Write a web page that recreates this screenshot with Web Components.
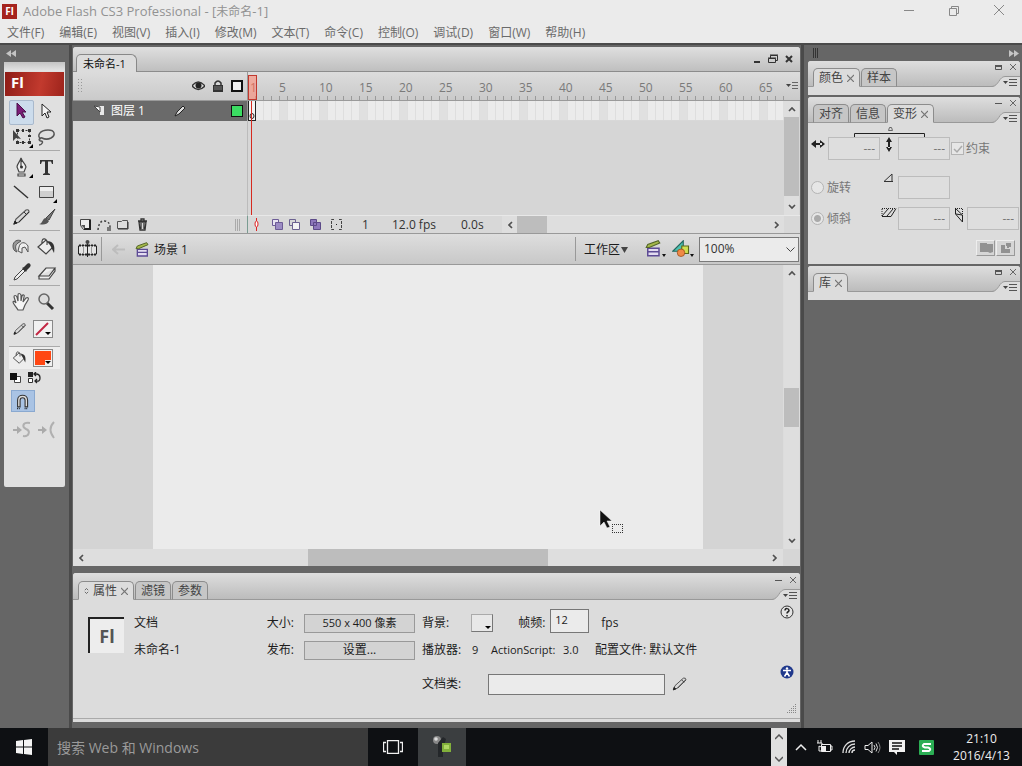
<!DOCTYPE html>
<html lang="zh-CN">
<head>
<meta charset="utf-8">
<title>Adobe Flash CS3 Professional</title>
<style>
html,body{margin:0;height:100%}
body{font:12px/16px "Open Sans","Noto Sans CJK SC",sans-serif;color:#1c1c1c;background:#666;overflow:hidden}
</style>
</head>
<body>
<flash-app></flash-app>
<script>
const RESET = `<style>
*{box-sizing:border-box}
button,input,select{font:inherit;color:inherit;margin:0;padding:0;border:0;background:none;border-radius:0;min-width:0}
button{display:inline-flex;align-items:center;justify-content:center}
svg{display:block;flex:none}
</style>`;
function define(name, html, ready) {
  const template = document.createElement('template');
  template.innerHTML = RESET + html;
  customElements.define(name, class extends HTMLElement {
    constructor() {
      super();
      this.attachShadow({ mode: 'open' }).append(template.content.cloneNode(true));
    }
    connectedCallback() { if (ready) ready(this, this.shadowRoot); }
  });
}

/* ---------- shared pieces ---------- */

const ICONS = {
  arrow: '<path d="M7 3v13l3-3 3 5 2-1-3-5h4z" fill="#7b1d78" stroke="#4b124a"/>',
  subarrow: '<path d="M7 4v12l3-3 2 5 2-1-2-5h4z" fill="#f4f4f4" stroke="#222"/>',
  transform: '<path d="M7.500 5.500h12v12h-12z" fill="none" stroke="#333" stroke-dasharray="2 2"/><path d="M6 4h3v3H6zM12 4h2v3h-2zM18 4h3v3h-3zM18 10h3v2h-3zM12 16h2v3h-2zM18 16h3v3h-3zM6 16h3v3H6z" fill="#333"/><path d="M3 5v11l3-3 5 1z" fill="#444"/><path d="M23 23h-4l4-4z" fill="#000"/>',
  lasso: '<path d="M6 14c-5-3-1-9 7-9 7 0 8 5 3 8-4 2-7 1-9 0-3-1-4 3-1 3 3 0 1 4-2 4" fill="none" stroke="#555" stroke-width="1.500"/>',
  pen: '<path d="M11 3c-1 4-4 6-4 9l2 5h5l2-5c0-3-4-5-5-9zM11 5v7M8 19h7v2H8z" fill="#eee" stroke="#444" stroke-width="1.200"/><circle cx="11.500" cy="12" r="1.500" fill="#333"/><path d="M23 23h-4l4-4z" fill="#000"/>',
  text: '<path d="M5 5h13v4h-1l-1-2.500h-3V18l2 1v1H8v-1l2-1V6.500H7L6 9H5z" fill="#333"/>',
  line: '<path d="M4 6l14 12" stroke="#333" stroke-width="1.500"/>',
  rect: '<path d="M4.500 6.500h14v11h-14z" fill="#cfcfcf" stroke="#444"/><path d="M5 7h13v4H5z" fill="#eee"/><path d="M22 23h-4l4-4z" fill="#000"/>',
  pencil: '<path d="M4 19l2-5L16 5q3-1 3 2L9 17z" fill="#d8d8d8" stroke="#555" stroke-width="1.200"/><path d="M4 19l1-3 2 2z" fill="#222" stroke="#222"/><path d="M14 7l3 3M9 17l10-10" stroke="#333"/>',
  brush: '<path d="M20 4L11 13l3 2z" fill="#777" stroke="#444"/><path d="M4 19c4 0 3-6 7-6l3 3c-2 4-6 4-10 3z" fill="#555"/>',
  ink: '<path d="M3 11c0-5 5-7 8-5l-3 2c-3 2-3 5-1 9-3-1-4-3-4-6z" fill="#999" stroke="#555"/><path d="M9 12c1-5 6-6 9-1v6l-3-5-3 1v5l-4-2z" fill="#eee" stroke="#555"/>',
  bucket: '<path d="M3 12l8-7 7 7-7 7zM7 9c-1-8 6-6 5 1" fill="#eee" stroke="#444" stroke-width="1.200"/><path d="M13 6c6 1 7 5 6 12l-3-6z" fill="#333"/>',
  dropper: '<path d="M4 20l1-3 8-8 2 2-8 8z" fill="#eee" stroke="#444"/><path d="M12 8l2-1 3-3c2-2 5 1 3 3l-3 3-1 2z" fill="#333"/>',
  eraser: '<path d="M4 16l7-8h9l-6 8zM4 16v3h10l6-8V8" fill="#eee" stroke="#444" stroke-width="1.200"/>',
  hand: '<path d="M8 20c-2-4-5-6-5-8 0-1 2-1 3 1L4 7c0-2 2-2 3 0l1 4V5c0-2 2-2 3 0v6l1-5c1-2 3-1 2 1l-1 5 3-4c2-1 3 0 2 2l-3 5-2 5z" fill="#f4f4f4" stroke="#555" stroke-width="1.200"/>',
  zoom: '<path d="M12 13l6 6" stroke="#333" stroke-width="3"/><circle cx="9" cy="9" r="5" fill="#ddd" stroke="#666" stroke-width="1.500"/>',
  magnet: '<path d="M5.500 19V11c0-8 12-8 12 0v8h-3v-8c0-4-6-4-6 0v8z" fill="#ddd" stroke="#333" stroke-width="1.300"/><path d="M5 21h4M14 21h4" stroke="#111" stroke-width="1.500" stroke-dasharray="1 1"/>',
  smooth: '<path d="M3 12h5" stroke="#aaa" stroke-width="2"/><path d="M7 8l5 4-5 4z" fill="#aaa"/><path d="M20 5c-8-1-8 4-4 6 5 2 3 8-3 7" fill="none" stroke="#b0b0b0" stroke-width="2"/>',
  straighten: '<path d="M3 12h5" stroke="#aaa" stroke-width="2"/><path d="M7 8l5 4-5 4z" fill="#aaa"/><path d="M19 4q-7 7 0 16" fill="none" stroke="#b0b0b0" stroke-width="2"/>',
  scene: '<path d="M5 11h15v10H5z" fill="#e3dcf0" stroke="#5d4b95" stroke-width="2"/><path d="M5 15.500h15" stroke="#5d4b95" stroke-width="2"/><path d="M3 10l2-4L19 1l2 3L7 10z" fill="#a4b84a" stroke="#55662a" stroke-width="1.500"/>',
  symbols: '<path d="M1 15L15 1v14z" fill="#4dc0b0" stroke="#24675e" stroke-width="1.500"/><path d="M13 8h9v10h-9z" fill="#d0e050" stroke="#5b681b" stroke-width="1.500"/><circle cx="12" cy="17" r="5" fill="#f08a45" stroke="#9a4a18"/>'
};

define('ui-icon', `<style>:host{display:block;width:24px;height:24px;flex:none}svg{width:100%;height:100%}</style>
<svg viewBox="0 0 24 24" aria-hidden="true"></svg>`,
  (host, root) => { root.querySelector('svg').innerHTML = ICONS[host.getAttribute('name')] || ''; });

define('scroll-bar', `<style>
:host{display:flex;background:#dedede;flex:none;--before:0;--thumb:1;--after:0}
:host([vertical]){flex-direction:column;width:15px}
:host(:not([vertical])){height:17px}
button{flex:none;width:15px;height:17px}
:host([vertical]) button{width:15px;height:16px}
.a{flex:var(--before) 1 0}.t{flex:var(--thumb) 1 0;background:#bdbdbd}.b{flex:var(--after) 1 0}
:host(:not([vertical])) svg{transform:rotate(-90deg)}
</style>
<button aria-label="向前滚动"><svg width="8" height="6" viewBox="0 0 8 6"><path d="M1 5l3-3 3 3" fill="none" stroke="#505050" stroke-width="1.700"/></svg></button>
<div class="a"></div><div class="t"></div><div class="b"></div>
<button aria-label="向后滚动"><svg width="8" height="6" viewBox="0 0 8 6"><path d="M1 1l3 3 3-3" fill="none" stroke="#505050" stroke-width="1.700"/></svg></button>`);

define('panel-tab', `<style>
:host{display:block}
button{height:19px;padding:0 5px;gap:4px;border:1px solid #8c8c8c;border-bottom-color:#999;border-radius:5px 5px 0 0;background:#c6c6c6;color:#444;line-height:16px;white-space:nowrap}
:host([active]) button{background:#dcdcdc;border-bottom-color:#dcdcdc}
.x,.s{display:none}:host([active]) .x{display:block}:host([sortable]) .s{display:block}
</style>
<button role="tab"><svg class="s" width="5" height="8" viewBox="0 0 6 8"><path d="M1 3l2-2 2 2M1 5l2 2 2-2" fill="none" stroke="#555"/></svg><slot></slot><svg class="x" width="7" height="8" viewBox="0 0 7 8"><path d="M0 1l7 7M7 1L0 8" stroke="#777" stroke-width="1.200"/></svg></button>`);

define('panel-box', `<style>
:host{display:flex;flex-direction:column;background:#dcdcdc;border-radius:3px 3px 0 0;overflow:hidden}
header{display:flex;align-items:flex-end;justify-content:space-between;height:var(--strip,26px);padding-left:5px;background:linear-gradient(#dedede,#bcbcbc);border-bottom:1px solid #999;flex:none}
.tabs{display:flex;gap:1px;margin-bottom:-1px}
.ctl{display:flex;flex-direction:column;align-items:flex-end;margin-bottom:-1px}
.win{display:flex;gap:6px;padding-right:3px}
.win button{width:8px;height:10px}
.mark{display:none}:host([collapsed]) .full{display:block}:host(:not([collapsed])) .min{display:block}
</style>
<header><div class="tabs" role="tablist"><slot name="tab"></slot></div>
<div class="ctl"><div class="win"><button aria-label="最小化"><svg class="mark min" width="8" height="8" viewBox="0 0 8 8"><path d="M0 3.500h7" stroke="#555"/></svg><svg class="mark full" width="8" height="8" viewBox="0 0 8 8"><path d="M.5 1.500h6v4h-6z" fill="none" stroke="#555"/><path d="M0 2h7" stroke="#555" stroke-width="2"/></svg></button><button aria-label="关闭"><svg width="8" height="8" viewBox="0 0 8 8"><path d="M1 0l6 6M7 0L1 6" stroke="#666"/></svg></button></div>
<button aria-label="面板菜单"><svg width="28" height="14" viewBox="0 0 28 14"><path d="M0 14C7 13 7 3 13 3H28V14z" fill="#dcdcdc"/><path d="M0 13.500C7 13 7 3.500 13 3.500H28" fill="none" stroke="#999"/><path d="M11 8h5l-2.500 3z" fill="#444"/><path d="M17 6.500h8M17 9.500h8M17 12.500h8" stroke="#555"/></svg></button></div></header>
<slot></slot>`);

/* ---------- window chrome ---------- */

define('title-bar', `<style>
:host{display:flex;align-items:center;height:22px;padding:0 17px 0 2px;gap:6px;background:#ebebeb;color:#929292;flex:none}
.logo{width:15px;height:15px;background:#a5231d;color:#fff;font-weight:700;font-size:10px;line-height:14px;text-align:center}
.name{flex:1;font-size:13px;padding-top:1px}
.name span{font-size:12px}
.win{display:flex;gap:33px}
.win button{width:12px;height:12px}
</style>
<div class="logo">Fl</div><div class="name">Adobe Flash CS3 Professional - [<span>未命名</span>-1]</div>
<div class="win"><button aria-label="最小化"><svg width="12" height="12"><path d="M1 5.500h10" stroke="#888"/></svg></button><button aria-label="还原"><svg width="12" height="12"><path d="M1.500 3.500h7v7h-7zM3.500 3.500v-2h7v7h-2" fill="none" stroke="#888"/></svg></button><button aria-label="关闭"><svg width="12" height="12"><path d="M1 0l10 10M11 0L1 10" stroke="#888"/></svg></button></div>`);

define('menu-bar', `<style>
:host{display:block;background:#ebebeb;border-bottom:2px solid #4a4a4a;flex:none}
nav{display:flex;gap:15px;height:21px;padding:0 7px;align-items:center;color:#6a6a6a}
button{white-space:nowrap}
</style><nav></nav>`, (host, root) => {
  root.querySelector('nav').innerHTML = ['文件(F)', '编辑(E)', '视图(V)', '插入(I)', '修改(M)', '文本(T)', '命令(C)', '控制(O)', '调试(D)', '窗口(W)', '帮助(H)']
    .map(t => `<button>${t}</button>`).join('');
});

/* ---------- tool palette ---------- */

define('tools-panel', `<style>
:host{display:block;width:69px;padding-left:4px;flex:none}
.fold{width:100%;height:16px;justify-content:flex-start;padding-left:2px}
.box{width:61px;height:425px;background:#e0e0e0;border-radius:2px}
.grip{height:9px;background:linear-gradient(#c4c4c4,#e4e4e4)}
.brand{height:24px;margin:1px 1px 0;padding-left:6px;background:linear-gradient(100deg,#8e1c16,#c23a2e 60%,#9c231b);color:#fff;font-weight:700;font-size:15px;line-height:21px}
.g{display:grid;grid-template-columns:25px 25px;grid-auto-rows:25px;margin:0 5px;padding:4px 0 0}
.g button{width:25px;height:25px}
.g+.g{border-top:1px solid #aaa}
.on{background:#ccdcec;outline:1px solid #a9b9cc;outline-offset:-1px;border-radius:2px}
.color{display:flex;align-items:center;height:25px;padding-left:7px;margin-top:2px}
.fill{height:23px;margin:4px 5px 0;padding-left:2px;border-top:1px solid #aaa;background:#ededed}
.color ui-icon{width:18px;height:18px}
.sw{width:20px;height:18px;margin-left:4px;border:1px solid #888;background:#f1f1f1}
.minis{display:flex;gap:6px;height:18px;align-items:center;padding-left:6px}
.snap{padding-top:3px;padding-left:7px}
.snap button{width:24px;height:22px;background:#a9c3e4;outline:1px solid #8aa9d0;outline-offset:-1px}
.snap ui-icon{width:20px;height:20px}
.g.opt{border:0;padding-top:3px}
</style>
<button class="fold" aria-label="折叠面板"><svg width="10" height="7"><path d="M5 0v7L0 3.500zM10 0v7L5 3.500z" fill="#c4c4c4"/></svg></button>
<div class="box"><div class="grip"></div><div class="brand">Fl</div>
<div class="g" data-t="arrow:选择工具,subarrow:部分选取工具,transform:任意变形工具,lasso:套索工具"></div>
<div class="g" data-t="pen:钢笔工具,text:文本工具,line:线条工具,rect:矩形工具,pencil:铅笔工具,brush:刷子工具"></div>
<div class="g" data-t="ink:墨水瓶工具,bucket:颜料桶工具,dropper:滴管工具,eraser:橡皮擦工具"></div>
<div class="g" data-t="hand:手形工具,zoom:缩放工具"></div>
<div class="color"><ui-icon name="pencil"></ui-icon><button class="sw" aria-label="笔触颜色"><svg width="18" height="16"><path d="M2 14L14 2" stroke="#c22643" stroke-width="2"/><path d="M11 11h6l-3 3z" fill="#000"/></svg></button></div>
<div class="color fill"><ui-icon name="bucket"></ui-icon><button class="sw" aria-label="填充颜色"><svg width="18" height="16"><path d="M1 1h16v9h-6v5H1z" fill="#ff4713"/><path d="M11 11h6l-3 3z" fill="#000"/></svg></button></div>
<div class="minis"><button aria-label="黑白"><svg width="12" height="12"><path d="M4.500 4.500h6v6h-6z" fill="#fff" stroke="#444"/><path d="M0 1h7v7H0z" fill="#111"/></svg></button><button aria-label="交换颜色"><svg width="13" height="12"><path d="M0 0h5v5H0z" fill="#222"/><path d="M.5 6.500h4v4h-4z" fill="#fff" stroke="#333"/><path d="M6 2h2q4 0 4 4t-4 3H7M8 0L6 2l2 2M9 7L7 9l2 2" fill="none" stroke="#222" stroke-width="1.300"/></svg></button></div>
<div class="snap"><button aria-label="贴紧至对象"><ui-icon name="magnet"></ui-icon></button></div>
<div class="g opt" data-t="smooth:平滑,straighten:伸直"></div>
</div>`, (host, root) => {
  root.querySelectorAll('[data-t]').forEach(g => {
    g.innerHTML = g.dataset.t.split(',').map(s => {
      const [n, label] = s.split(':');
      return `<button class="${n === 'arrow' ? 'on' : ''}" aria-label="${label}"><ui-icon name="${n}"></ui-icon></button>`;
    }).join('');
  });
});

/* ---------- document window ---------- */

define('time-line', `<style>
:host{display:grid;grid-template-columns:174px minmax(0,1fr) 16px;grid-template-rows:29px 20px 94px 18px;flex:none;background:#d6d6d6}
.lh,.rh,.mh{background:linear-gradient(#dcdcdc,#cacaca);border-bottom:1px solid #9a9a9a}
.lh{display:flex;align-items:center;padding:0 4px 0 4px;gap:7px}
.grip{width:5px;height:16px;margin-right:auto;background:radial-gradient(circle,#999 1px,transparent 1px) 0 0/3px 3px}
.rh{position:relative;display:flex;align-items:flex-end;overflow:hidden;color:#7a7a7a;border-left:1px solid #999;
 background:repeating-linear-gradient(90deg,transparent 0 7px,#9a9a9a 7px 8px) 0 100%/100% 4px no-repeat,linear-gradient(#dcdcdc,#cacaca)}
.rh span{flex:0 0 40px;padding-bottom:4px}
.rh span:first-child{flex-basis:31px;padding-left:2px;color:#8d4a42}
.head{position:absolute;left:0;top:3px;width:9px;height:25px;border:1px solid #c1392f;background:#ff8c7899}
.mh{display:flex;align-items:center;justify-content:center}
.layer{display:flex;align-items:center;background:#6a6a6a;color:#fff;padding:0 4px 0 20px}
.layer span{flex:0 0 68px;padding-left:6px}
.chip{width:12px;height:12px;margin-left:auto;border:1px solid #111;background:#3bdc62}
.frames{position:relative;border-left:1px solid #999;border-bottom:1px solid #d8d8d8;
 background:repeating-linear-gradient(90deg,transparent 0 7px,#dedede 7px 8px),repeating-linear-gradient(90deg,#ebebeb 0 32px,#e0e0e0 32px 40px)}
.key{position:absolute;left:0;top:0;width:8px;height:20px;border:1px solid #222;border-top:0;background:#f4f4f4;display:flex;align-items:flex-end;justify-content:center}
.needle{position:absolute;left:3px;top:0;width:1px;height:114px;background:#d62a20}
.v{grid-column:3;grid-row:2/4}
.empty{grid-column:1}
.canvas{grid-column:2;border-left:1px solid #bbb}
.lf,.rf{display:flex;align-items:center;background:#d8d8d8;border-top:1px solid #e8e8e8}
.lf{padding:0 6px 0 4px;gap:3px}
.lf button{width:16px;height:16px}
.g2{width:6px;height:12px;margin-left:auto;background:repeating-linear-gradient(90deg,#aaa 0 1px,transparent 1px 2px)}
.rf{grid-column:2/4;border-left:1px solid #7a9c92}
.rf button{width:17px;height:16px}
.rf .i1{margin-right:4px}.rf .i3{margin:0 4px}
.n{width:47px;padding-left:17px}.f{width:69px}.s{width:41px}
.rf span{color:#333}
scroll-bar{min-width:0}
.rf scroll-bar{flex:1;margin-right:16px}
</style>
<div class="lh"><div class="grip"></div><svg width="13" height="12" viewBox="0 0 13 12"><path d="M0 6q6-8 13 0q-7 7-13 0" fill="#ddd" stroke="#333" stroke-width="1.500"/><circle cx="6.500" cy="5.500" r="3" fill="#222"/></svg><svg width="12" height="14" viewBox="0 0 12 14"><path d="M3 6V4q3-4 6 0v2" fill="none" stroke="#333" stroke-width="1.500"/><path d="M1 6h10v7H1z" fill="#333"/><path d="M2 8h8M2 10h8" stroke="#777"/></svg><svg width="12" height="12"><path d="M1 1h10v10H1z" fill="#eee" stroke="#111" stroke-width="2"/></svg></div>
<div class="rh"></div>
<div class="mh"><button aria-label="帧视图"><svg width="13" height="8"><path d="M0 2h5L2.500 5z" fill="#444"/><path d="M6 .5h6M6 3.500h6M6 6.500h6" stroke="#666"/></svg></button></div>
<div class="layer"><svg width="12" height="12"><path d="M1 1h10v9H7V6z" fill="#e8e8e8"/><path d="M1 1l6 1v5z" fill="#fff" stroke="#444"/></svg><span>图层 1</span><svg width="14" height="14"><path d="M2 12l2-4 6-6 2 2-6 6z" fill="#ddd" stroke="#222"/></svg><div class="chip"></div></div>
<div class="frames"><div class="key"><svg width="6" height="8"><ellipse cx="3" cy="4" rx="2" ry="2.500" fill="none" stroke="#222"/></svg></div><div class="needle"></div></div>
<scroll-bar class="v" vertical style="--thumb:79;--after:3"></scroll-bar>
<div class="empty"></div><div class="canvas"></div>
<div class="lf">
<button aria-label="插入图层"><svg width="11" height="11"><path d="M.5.5h10v10h-7l-3-4z" fill="#eee" stroke="#444"/><path d="M10 1v9H4" fill="none" stroke="#222" stroke-width="2"/><path d="M1 6h4v4z" fill="#555"/></svg></button>
<button aria-label="添加引导层"><svg width="15" height="12"><path d="M1 11Q2 1 8 2q5 1 5 6" fill="none" stroke="#444" stroke-width="1.500" stroke-dasharray="2 2"/><path d="M10 8h4v4h-4z" fill="#777"/></svg></button>
<button aria-label="插入图层文件夹"><svg width="12" height="11"><path d="M.5 2.500h4l1-1h5v8H.5z" fill="#ddd" stroke="#555"/><path d="M1 10h10V3" fill="none" stroke="#333"/></svg></button>
<button aria-label="删除图层"><svg width="11" height="13"><path d="M1 3h9M4 3V1h3v2M2 4l1 8h5l1-8zM4 5v6M7 5v6" fill="none" stroke="#333" stroke-width="1.300"/></svg></button><div class="g2"></div></div>
<div class="rf">
<button class="i1" aria-label="帧居中"><svg width="5" height="13"><path d="M2.500 0v13" stroke="#d22"/><ellipse cx="2.500" cy="6" rx="1.500" ry="3" fill="#fff" stroke="#d22"/></svg></button>
<button aria-label="绘图纸外观"><svg width="11" height="11"><path d="M.5.5h6v6h-6z" fill="#e8e4f2" stroke="#6c5b96"/><path d="M3.500 3.500h7v7h-7z" fill="#9c8cc4" stroke="#6c5b96"/></svg></button>
<button aria-label="绘图纸外观轮廓"><svg width="11" height="11"><path d="M.5.5h6v6h-6z" fill="none" stroke="#6c6290"/><path d="M3.500 3.500h7v7h-7z" fill="#f4f4f4" stroke="#6c6290"/></svg></button>
<button class="i3" aria-label="编辑多个帧"><svg width="11" height="11"><path d="M.5.5h6v6h-6zM3.500 3.500h7v7h-7z" fill="#8d77bb" stroke="#5c4a88"/></svg></button>
<button aria-label="修改绘图纸标记"><svg width="11" height="11"><path d="M3 .5H.5v10H3M8 .5h2.500v10H8" fill="none" stroke="#444" stroke-dasharray="3 1"/><path d="M5 5h1v1H5z" fill="#222"/></svg></button>
<span class="n">1</span><span class="f">12.0 fps</span><span class="s">0.0s</span>
<scroll-bar style="--thumb:29;--after:218"></scroll-bar></div>`, (host, root) => {
  let s = '<span>1</span>';
  for (let i = 5; i <= 65; i += 5) s += `<span>${i}</span>`;
  root.querySelector('.rh').innerHTML = s + '<div class="head"></div>';
});

define('edit-bar', `<style>
:host{display:flex;align-items:center;height:32px;padding-right:1px;border-top:1px solid #999;border-bottom:1px solid #999;background:linear-gradient(#dedede,#c8c8c8);flex:none}
.sep{width:1px;height:24px;background:#999}
.film{width:28px;height:30px}
.back{width:32px;height:24px}
.crumb{gap:4px;padding-top:2px}
.crumb ui-icon{width:16px;height:16px}
.tools ui-icon{width:18px;height:18px}
.ws{margin:0 15px 0 8px;gap:1px;padding-top:2px}
.tools{display:flex;gap:6px;margin-right:5px}
.tools button{width:22px;gap:0;align-items:flex-end}
.end{display:flex;align-items:center;margin-left:auto}
label{position:relative;display:block;width:100px;height:25px}
select{width:100%;height:100%;padding:0 4px 1px;border:1px solid #7a7a7a;background:#ebebeb;appearance:none;color:#333}
label svg{position:absolute;right:4px;top:10px}
</style>
<button class="film" aria-label="编辑帧"><svg width="19" height="18"><path d="M.5 5.500h18v9H.5z" fill="#e4e4e4" stroke="#888"/><path d="M1 5.500h18M1 14.500h18" stroke="#222" stroke-width="2" stroke-dasharray="2 1"/><path d="M9.500 1v16M.5 6v8M18.500 6v8" stroke="#222"/><path d="M5.500 6v8M13.500 6v8" stroke="#999"/><circle cx="9.500" cy="2" r="2" fill="#444"/></svg></button><div class="sep"></div>
<button class="back" aria-label="返回"><svg width="13" height="11"><path d="M6 1L1 5.500 6 10M1 5.500h12" fill="none" stroke="#bdbdbd" stroke-width="2"/></svg></button>
<button class="crumb"><ui-icon name="scene"></ui-icon>场景 1</button>
<div class="end"><div class="sep"></div><button class="ws">工作区<svg width="8" height="7"><path d="M0 0h7L3.500 6z" fill="#444"/></svg></button>
<div class="tools"><button aria-label="编辑场景"><ui-icon name="scene"></ui-icon><svg width="4" height="4"><path d="M0 0h4L2 3z" fill="#111"/></svg></button><button aria-label="编辑元件"><ui-icon name="symbols"></ui-icon><svg width="4" height="4"><path d="M0 0h4L2 3z" fill="#111"/></svg></button></div>
<label aria-label="缩放比例"><select aria-label="缩放比例"><option>100%</option></select><svg width="9" height="6"><path d="M.5.5l4 4 4-4" fill="none" stroke="#444"/></svg></label></div>`);

define('stage-view', `<style>
:host{display:grid;grid-template-columns:minmax(0,1fr) 17px;grid-template-rows:minmax(0,1fr) 17px;flex:1;min-height:0}
.board{position:relative;background:#d4d4d4;display:flex;justify-content:center}
.stage{width:550px;background:#ebebeb}
.cursor{position:absolute;left:526px;top:244px}
.corner{background:#d6d6d6}
scroll-bar[vertical]{margin-left:1px}
</style>
<div class="board"><div class="stage"></div><svg class="cursor" width="26" height="26"><path d="M1 1v16l4-4 3 6 3-1-3-6h5z" fill="#111" stroke="#fff" stroke-width=".5"/><path d="M13 15.500h11M13 23.500h11M13.500 15v9M23.500 15v9" fill="none" stroke="#333" stroke-dasharray="1 1"/></svg></div>
<scroll-bar vertical style="--before:107;--thumb:39;--after:106"></scroll-bar>
<scroll-bar style="--before:220;--thumb:241;--after:220"></scroll-bar><div class="corner"></div>`);

define('document-window', `<style>
:host{display:flex;flex-direction:column;flex:1;min-height:0;background:#dcdcdc;border-radius:3px 3px 0 0;overflow:hidden}
header{display:flex;align-items:flex-end;justify-content:space-between;height:25px;padding:0 7px 0 3px;background:linear-gradient(#dfdfdf,#bfbfbf);border-bottom:1px solid #8c8c8c;flex:none}
.tab{height:18px;padding:0 10px 0 6px;margin-bottom:-1px;border:1px solid #888;border-bottom:0;border-radius:5px 6px 0 0;background:#dcdcdc;color:#111;font-size:11px}
.win{display:flex;gap:7px;align-self:center}
</style>
<header><button class="tab">未命名-1</button><div class="win"><button aria-label="最小化"><svg width="8" height="10"><path d="M1 8h6" stroke="#333" stroke-width="2"/></svg></button><button aria-label="还原"><svg width="10" height="10"><path d="M.5 4.500h7v4h-7zM2.500 4V1.500h7v5H8M2 1h8M0 4h8" fill="none" stroke="#333"/></svg></button><button aria-label="关闭"><svg width="8" height="9"><path d="M1 1l6 6M7 1L1 7" stroke="#333" stroke-width="2"/></svg></button></div></header>
<time-line></time-line><edit-bar></edit-bar><stage-view></stage-view>`);

/* ---------- property inspector ---------- */

define('properties-panel', `<style>
:host{display:block;flex:none}
panel-box{height:149px;--strip:27px}
.body{display:flex;flex:1;margin-bottom:3px;border-bottom:1px solid #aaa;font-size:11px}
.grid{display:grid;grid-template-columns:46px 128px 42px 111px minmax(0,1fr);grid-template-rows:28px 26px 42px;align-items:center;flex:1;padding:9px 0 0 15px}
.doc{grid-row:1/3;align-self:start;width:36px;height:36px;margin-top:8px;border:1px solid #222;border-width:2px 0 0 2px;background:#ededed;color:#555;font-weight:700;font-size:18px;line-height:34px;text-align:center}
.lab{text-align:right;padding-right:10px;font-size:12px}
.grid>button{height:19px;border:1px solid #999;background:#d3d3d3}
.row{display:flex;align-items:center;padding-left:7px;white-space:nowrap}
.bg{width:22px;height:18px;margin:0 25px 0 22px;border:1px solid #aaa;border-color:#aaa #777 #777 #aaa;background:#e8e8e8;align-items:flex-end;justify-content:flex-end}
.fps{width:39px;height:24px;padding:0 4px 3px;margin:0 12px 4px 5px;border:1px solid #777;background:#ebebeb;font-size:11px}
.cls{width:177px;height:21px;padding:0 4px;border:1px solid #777;background:#ebebeb}
.cls+ui-icon{width:20px;height:20px;margin-left:5px}
.r3{grid-column:5;grid-row:3}
.t{font-size:12px}
.w1{width:50px}.w2{width:19px}.w3{width:72px}.w4{width:32px}.w5{width:66px}
aside{display:flex;flex-direction:column;align-items:flex-end;padding:5px 3px 4px 0}
aside button{margin:0 3px 46px 0}
aside svg:last-child{margin-top:auto}
aside button+button{margin-bottom:0}
</style>
<panel-box><panel-tab slot="tab" active sortable>属性</panel-tab><panel-tab slot="tab">滤镜</panel-tab><panel-tab slot="tab">参数</panel-tab>
<div class="body"><div class="grid"><div class="doc">Fl</div><div class="t">文档</div><div class="lab">大小:</div><button>550 x 400 像素</button>
<div class="row t"><span>背景:</span><button class="bg" aria-label="背景颜色"><svg width="7" height="5"><path d="M0 0h6L3 3z" fill="#000"/></svg></button><label for="fps">帧频:</label><input class="fps" id="fps" value="12"><span>fps</span></div>
<div class="t">未命名-1</div><div class="lab">发布:</div><button class="t">设置...</button>
<div class="row"><span class="t w1">播放器:</span><span class="w2">9</span><span class="w3">ActionScript:</span><span class="w4">3.0</span><span class="t">配置文件: 默认文件</span></div>
<div class="row r3"><label class="t w5" for="cls">文档类:</label><input class="cls" id="cls"><ui-icon name="pencil"></ui-icon></div></div>
<aside><button aria-label="帮助"><svg width="14" height="14"><circle cx="7" cy="7" r="6" fill="#e4e4e4" stroke="#333"/><path d="M5 5.500c0-3 4-2 4 0 0 1.500-2 1-2 3M7 10v1.500" fill="none" stroke="#222" stroke-width="1.500"/></svg></button>
<button aria-label="辅助功能"><svg width="14" height="14"><circle cx="7" cy="7" r="6.500" fill="#20398c"/><circle cx="7" cy="3.500" r="1.200" fill="#fff"/><path d="M3 5.500h8M7 5.500v3M7 7.500l-2.500 4M7 7.500l2.500 4" stroke="#fff" stroke-width="1.500"/></svg></button>
<svg width="10" height="10"><path d="M8.500 0v10M6.500 2v8M4.500 4v6M2.500 6v4M.5 8v2" stroke="#888" stroke-dasharray="1 1"/></svg></aside></div></panel-box>`);

/* ---------- right dock ---------- */

define('transform-panel', `<style>
:host{display:block;height:141px;color:#777}
.link{display:block;margin-left:46px}
.grid{display:grid;grid-template-columns:20px 52px 18px 52px 17px 52px;grid-template-rows:23px 31px 23px;row-gap:8px}
.grid input[type=text]{width:52px;height:23px;padding:0 4px;border:1px solid #bcbcbc;background:#dedede;text-align:right;color:#777}
.grid>svg{justify-self:center}
.grid .r2{margin-top:8px}
.grid svg.r2{margin-top:5px}
label{display:flex;align-items:center;gap:3px;white-space:nowrap}
label input{appearance:none;width:13px;height:13px;border:1px solid #b4b4b4;background:#e6e6e6;flex:none}
input[type=radio]{border-radius:50%}
input[type=radio]:checked{background:radial-gradient(circle,#aaa 3px,#e6e6e6 4px)}
.ck{position:relative;grid-column:5/7;gap:2px;padding-left:1px}
.ck svg{position:absolute;left:3px;top:8px}
.rd{grid-column:1/3;padding-left:3px}
.r3{grid-row:3}
.acts{display:flex;gap:1px;justify-content:flex-end;margin:10px 5px 0 0}
.acts button{width:19px;height:16px;border:1px solid #eee;border-color:#eee #999 #999 #eee;background:#d6d6d6}
</style>
<svg class="link" width="72" height="14"><path d="M.5 14v-3.500h70V14" fill="none" stroke="#222"/><path d="M34.500 7.500h4l-1-3h-2z" fill="#ddd" stroke="#666"/></svg>
<div class="grid">
<svg width="14" height="14"><path d="M0 7l5-4v8zM14 7L9 3v8zM3 6h8v2H3z" fill="#222"/></svg><input type="text" aria-label="宽度" value="---">
<svg width="8" height="16"><path d="M4 0l3 5H1zM4 15l3-5H1zM3 4h2v7H3z" fill="#222"/></svg><input type="text" aria-label="高度" value="---">
<label class="ck"><input type="checkbox" checked><svg width="10" height="9"><path d="M1 4l3 3 5-6" fill="none" stroke="#aaa" stroke-width="1.500"/></svg>约束</label>
<label class="rd r2"><input type="radio" name="m">旋转</label><svg class="r2" width="12" height="9"><path d="M1 8.500h9M1 8.500L9 1v7" fill="none" stroke="#333"/></svg><input class="r2" type="text" aria-label="旋转角度">
<label class="rd r3"><input type="radio" name="m" checked>倾斜</label><svg class="r3" width="16" height="12"><path d="M1 1.500h14M1 2v7" fill="none" stroke="#222" stroke-dasharray="1 1"/><path d="M1 9.500h9l5-8M1 9l6-7M6 9l6-7" fill="none" stroke="#222"/></svg><input class="r3" type="text" aria-label="水平倾斜" value="---"><svg class="r3" width="10" height="16"><path d="M1 1.500h7M8.500 2v5" fill="none" stroke="#222" stroke-dasharray="1 1"/><path d="M1.500 1v6l7 8V8L1 1M2 7l6 1" fill="none" stroke="#222"/></svg><input class="r3" type="text" aria-label="垂直倾斜" value="---"></div>
<div class="acts"><button aria-label="复制并应用变形"><svg width="14" height="12"><path d="M1 1h7v1h6v8l-3 1-2-1H1z" fill="#929292"/></svg></button><button aria-label="重置"><svg width="12" height="12"><path d="M1 3h4v4h5v4H1z" fill="#929292"/><path d="M6 1h5v4H9v1H7V4H6z" fill="#929292"/></svg></button></div>`);

define('side-dock', `<style>
:host{display:flex;flex-direction:column;gap:2px;width:212px;flex:none}
.bar{display:flex;justify-content:space-between;align-items:center;height:14px;padding:2px 1px 0 5px}
.pad{height:8px}
</style>
<div class="bar"><svg width="6" height="10"><path d="M.5 0v10M2.500 0v10M4.500 0v10" stroke="#333"/></svg><button aria-label="展开面板"><svg width="10" height="7"><path d="M0 0v7l5-3.500zM5 0v7l5-3.500z" fill="#c4c4c4"/></svg></button></div>
<panel-box collapsed><panel-tab slot="tab" active>颜色</panel-tab><panel-tab slot="tab">样本</panel-tab><div class="pad"></div></panel-box>
<panel-box><panel-tab slot="tab">对齐</panel-tab><panel-tab slot="tab">信息</panel-tab><panel-tab slot="tab" active>变形</panel-tab><transform-panel></transform-panel></panel-box>
<panel-box collapsed><panel-tab slot="tab" active>库</panel-tab><div class="pad"></div></panel-box>`);

/* ---------- taskbar ---------- */

define('task-bar', `<style>
:host{display:flex;align-items:center;height:38px;background:#0e1013;color:#eee;flex:none}
:host>button{height:38px;flex:none}
.start{width:48px}
.search{width:320px;height:38px;padding:0 9px 0 9px;background:#3b3b3b;font-size:14px;outline:0}
.search::placeholder{color:#9a9a9a;opacity:1}
.view{width:50px}
.app{width:48px;background:#3b3e40}
.sp{width:16px;height:38px;margin-left:auto;background:#e0e0e0;display:flex;flex-direction:column;align-items:center;justify-content:space-between;padding:6px 0 4px}
.tray{display:flex;align-items:center;gap:7px;padding-left:5px}
.tray button{width:17px;height:24px}
.s{margin-left:6px}
.clock{width:80px;padding-right:1px;line-height:17px;text-align:center}
</style>
<button class="start" aria-label="开始"><svg width="16" height="16"><path d="M0 2l7-1v6.500H0zM8 1l8-1v7.500H8zM0 8.500h7V15l-7-1zM8 8.500h8V16l-8-1z" fill="#f4f4f4"/></svg></button>
<input class="search" aria-label="搜索" placeholder="搜索 Web 和 Windows">
<button class="view" aria-label="任务视图"><svg width="20" height="14"><path d="M4.500.5h11v13h-11zM3 2.500H.5v9H3M17 2.500h2.500v9H17" fill="none" stroke="#f0f0f0" stroke-width="1.300"/></svg></button>
<button class="app" aria-label="录屏"><svg width="22" height="24"><circle cx="6" cy="5" r="4" fill="#888"/><circle cx="5" cy="4" r="1.800" fill="#ddd"/><path d="M7 8l5-6 3 2-3 10v8H7v-7z" fill="#24272a"/><path d="M11 8h9v9h-9z" fill="#82b03b"/><path d="M13 10h5v4h-5z" fill="#b0d765"/></svg></button>
<div class="sp"><svg width="8" height="6"><path d="M0 5l4-4 4 4" fill="none" stroke="#555" stroke-width="1.500"/></svg><svg width="8" height="6"><path d="M0 1l4 4 4-4" fill="none" stroke="#555" stroke-width="1.500"/></svg></div>
<div class="tray"><button aria-label="显示隐藏的图标"><svg width="12" height="8"><path d="M1 7l5-5 5 5" fill="none" stroke="#eee" stroke-width="1.500"/></svg></button>
<button aria-label="电池"><svg width="17" height="14"><path d="M5.500 4.500h9v7h-9zM15 6h1v4h-1" fill="none" stroke="#eee"/><path d="M6 6h4v5H6z" fill="#eee"/><path d="M1 3h5v2q-2 3-3 1M2 0v3M5 0v3M3 6v5h3" fill="none" stroke="#eee"/></svg></button>
<button aria-label="网络"><svg width="14" height="14"><path d="M1 13C1 6 6 1 13 1M4 13c0-5 4-9 9-9M7 13c0-3 3-6 6-6M10 13c0-2 1-3 3-3" fill="none" stroke="#ddd" stroke-width="1.400"/></svg></button>
<button aria-label="音量"><svg width="17" height="13"><path d="M1 4.500h3L8 1v11L4 8.500H1z" fill="none" stroke="#eee"/><path d="M10 4q2 2.500 0 5M12 2.500q3 4 0 8" fill="none" stroke="#ddd"/><path d="M14 1q4 5.500 0 11" fill="none" stroke="#888"/></svg></button>
<button aria-label="操作中心"><svg width="16" height="15"><path d="M0 0h16v12H8v3l-3-3H0z" fill="#f2f2f2"/><path d="M3 3h10M3 6h10M3 9h7" stroke="#111" stroke-width="1.400"/></svg></button>
<button class="s" aria-label="搜狗输入法"><svg width="15" height="15"><rect width="15" height="15" rx="1" fill="#2bae54"/><path d="M12 4H5Q2 6 6 7.500h3Q13 9 10 11H3" fill="none" stroke="#fff" stroke-width="2"/></svg></button>
<div class="clock">21:10<br>2016/4/13</div></div>`);

define('flash-app', `<style>
:host{display:flex;flex-direction:column;height:100vh;min-height:600px}
main{display:flex;flex:1;min-height:0;background:#666}
.center{display:flex;flex-direction:column;flex:1;min-width:0;padding:2px 0 6px 1px;gap:7px;border-left:3px solid #4a4a4a}
.split{width:7px;margin-left:1px;border-left:3px solid #4a4a4a;flex:none}
side-dock{margin-right:2px}
</style>
<title-bar></title-bar><menu-bar></menu-bar>
<main><tools-panel></tools-panel><div class="center"><document-window></document-window><properties-panel></properties-panel></div><div class="split"></div><side-dock></side-dock></main>
<task-bar></task-bar>`);
</script>
</body>
</html>
